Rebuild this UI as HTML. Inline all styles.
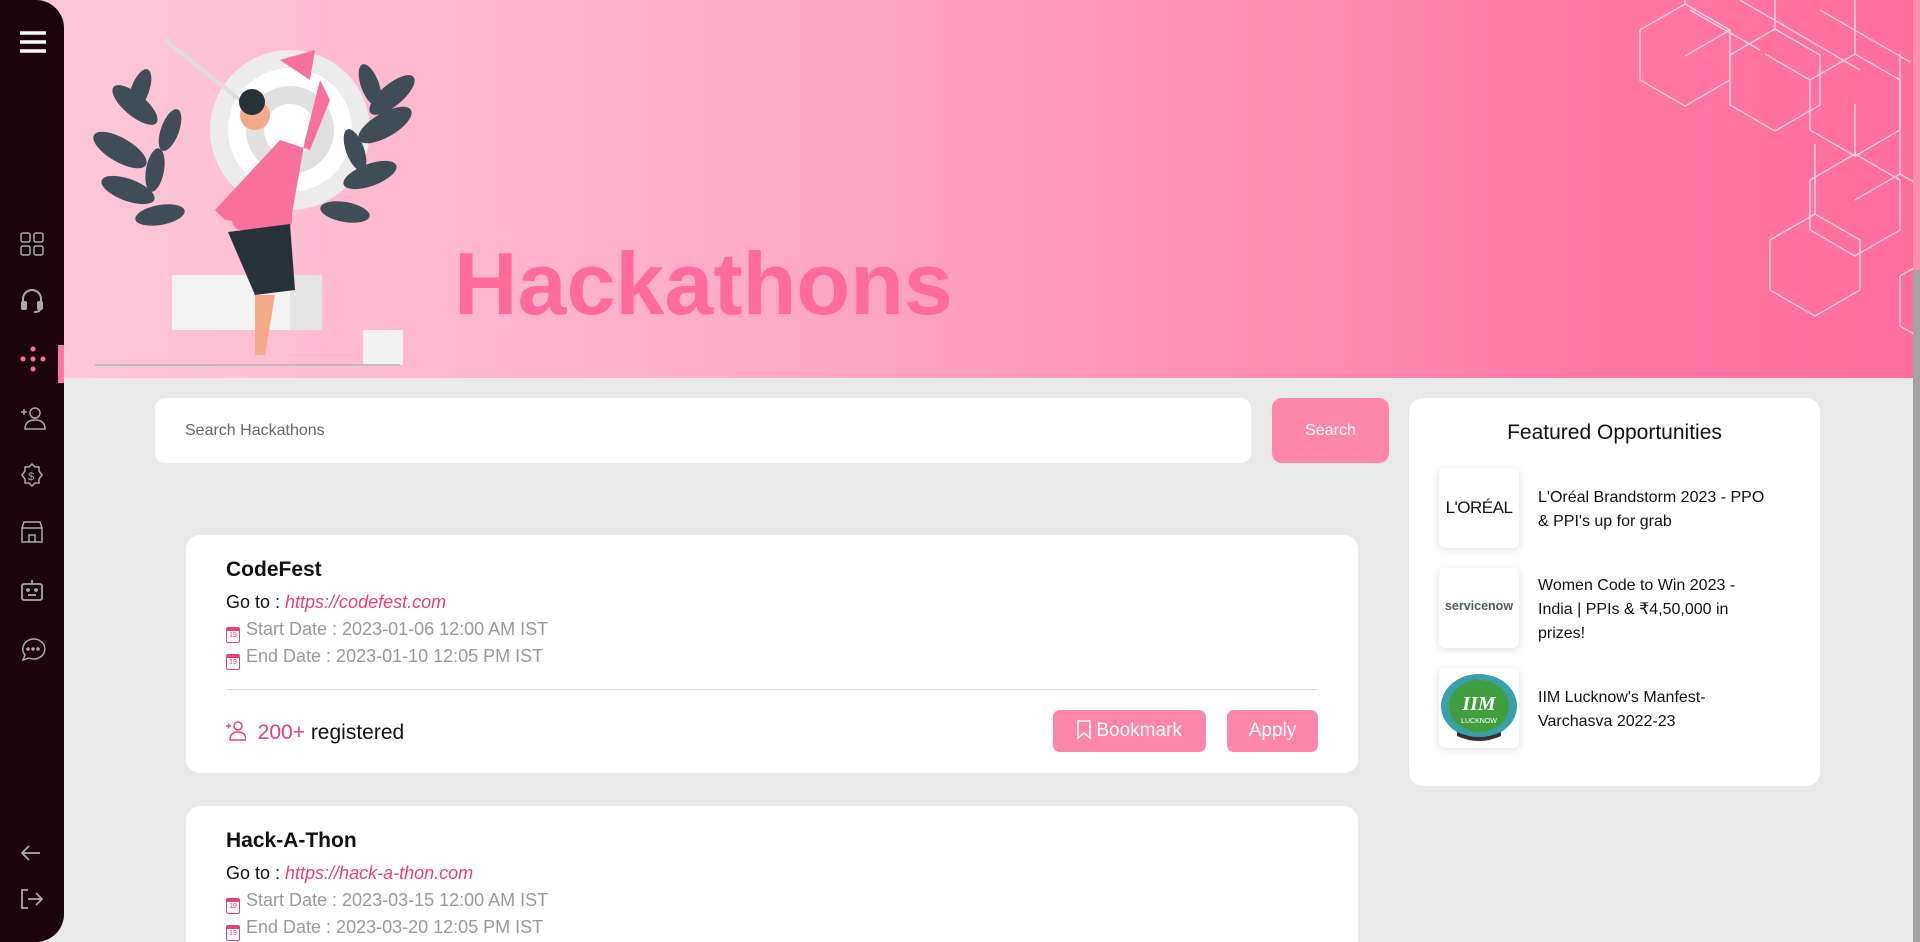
<!DOCTYPE html>
<html style="overflow:hidden;height:942px"><head><meta charset="utf-8"><style>
*{box-sizing:border-box;margin:0;padding:0}
body{width:1920px;height:942px;overflow:hidden;background:#e9e9e9;font-family:"Liberation Sans",sans-serif;position:relative}
.side{position:absolute;left:0;top:0;width:64px;height:942px;background:#1c030c;border-radius:0 28px 28px 0;z-index:5}
.side svg{position:absolute;left:20px}
.banner{position:absolute;left:40px;top:0;width:1873px;height:378px;background:linear-gradient(90deg,#fdc8da 0%,#ffa9c6 40%,#ff77a3 85%,#ff6d9d 100%);overflow:hidden}
.scroll{position:absolute;left:1913px;top:0;width:7px;height:942px;background:#ff8fb2}
.thumb{position:absolute;left:1913px;top:270px;width:7px;height:672px;background:#a3a3a3}
h1{position:absolute;top:233px;font-size:88px;font-weight:bold;color:#ff6b9b}
.search{position:absolute;left:155px;top:398px;width:1096px;height:65px;background:#fff;border-radius:10px;padding-left:30px;line-height:65px;font-size:16px;color:#666}
.sbtn{position:absolute;left:1272px;top:398px;width:117px;height:65px;background:#ff86ab;border-radius:10px;color:#fff;text-align:center;line-height:65px;font-size:16px}
.card{position:absolute;left:186px;width:1172px;background:#fff;border-radius:14px}
.card .t{position:absolute;left:40px;font-size:21px;font-weight:bold;color:#111}
.card .l{position:absolute;left:40px;font-size:18px;color:#111}
.card .l i{color:#e8407a}
.card .d{position:absolute;left:40px;font-size:18px;color:#999}
.cal{display:inline-block;width:14px;height:16px;border:1.5px solid #e8407a;border-radius:2px;border-top-width:4px;vertical-align:-2px;margin-right:6px;font-size:7px;color:#e8407a;text-align:center;line-height:10px}
.hr{position:absolute;left:40px;right:40px;height:1px;background:#ddd}
.btn{position:absolute;height:42px;background:#ff86ab;border-radius:7px;color:#fff;font-size:19px;line-height:42px;text-align:center}
.feat{position:absolute;left:1409px;top:398px;width:411px;height:388px;background:#fff;border-radius:14px}
.feat h2{position:absolute;left:0;right:0;top:23px;text-align:center;font-weight:normal;font-size:21px;color:#111}
.logo{position:absolute;left:30px;width:80px;height:80px;background:#fff;border-radius:6px;box-shadow:0 2px 8px rgba(0,0,0,.12);overflow:hidden}
.ft{position:absolute;left:129px;width:232px;font-size:16px;line-height:24px;color:#111}
</style></head><body>
<div class="banner">
<svg width="1873" height="378" style="position:absolute;left:0;top:0">
<g transform="translate(-40,0)">
<circle cx="290" cy="130" r="80" fill="#ececec"/><circle cx="290" cy="130" r="62" fill="#fff"/><circle cx="290" cy="130" r="44" fill="#e0e0e0"/><circle cx="290" cy="130" r="26" fill="#fff"/>
<line x1="165" y1="40" x2="240" y2="100" stroke="#ddd" stroke-width="4"/>
<g fill="#3f4d57">
<ellipse cx="120" cy="150" rx="30" ry="12" transform="rotate(30 120 150)"/><ellipse cx="135" cy="105" rx="28" ry="11" transform="rotate(40 135 105)"/><ellipse cx="128" cy="190" rx="28" ry="11" transform="rotate(20 128 190)"/><ellipse cx="160" cy="215" rx="25" ry="10" transform="rotate(-10 160 215)"/><ellipse cx="140" cy="90" rx="9" ry="22" transform="rotate(20 140 90)"/><ellipse cx="170" cy="130" rx="9" ry="22" transform="rotate(20 170 130)"/><ellipse cx="155" cy="170" rx="9" ry="22" transform="rotate(10 155 170)"/>
<ellipse cx="385" cy="125" rx="30" ry="12" transform="rotate(-30 385 125)"/><ellipse cx="392" cy="95" rx="28" ry="11" transform="rotate(-40 392 95)"/><ellipse cx="370" cy="175" rx="28" ry="11" transform="rotate(-20 370 175)"/><ellipse cx="345" cy="212" rx="25" ry="10" transform="rotate(10 345 212)"/><ellipse cx="370" cy="85" rx="9" ry="22" transform="rotate(-20 370 85)"/><ellipse cx="355" cy="150" rx="9" ry="22" transform="rotate(-20 355 150)"/>
</g>
<rect x="172" y="275" width="150" height="55" fill="#f3f3f3"/><rect x="290" y="275" width="32" height="55" fill="#e4e4e4"/>
<rect x="363" y="330" width="40" height="35" fill="#f2f2f2"/>
<line x1="95" y1="365" x2="400" y2="365" stroke="#bbb" stroke-width="2"/>
<path d="M215 210 L280 140 L310 150 L330 100 L320 80 L305 140 L290 225 L225 220 Z" fill="#f8719d"/>
<rect x="232" y="190" width="60" height="40" rx="10" fill="#f8719d"/>
<path d="M228 232 L290 224 L295 290 L255 295 Z" fill="#263238"/>
<path d="M255 295 L275 295 L265 355 L255 355 Z" fill="#f4a98b"/>
<circle cx="255" cy="115" r="15" fill="#f4a98b"/><circle cx="252" cy="102" r="13" fill="#263238"/>
<path d="M280 60 L315 50 L310 80 Z" fill="#f8719d"/>
</g>
<g stroke="#ffe3ee" stroke-width="1.5" fill="none" opacity=".85">
<path d="M1600 30 l45 -26 l45 26 v50 l-45 26 l-45 -26 z"/><path d="M1645 4 v-30 M1645 56 l45 -26"/>
<path d="M1690 55 l45 -26 l45 26 v50 l-45 26 l-45 -26 z"/><path d="M1735 29 v-40"/>
<path d="M1770 80 l45 -26 l45 26 v50 l-45 26 l-45 -26 z"/><path d="M1815 54 v-60 M1770 80 l-45 -26"/>
<path d="M1770 180 l45 -26 l45 26 v50 l-45 26 l-45 -26 z"/><path d="M1815 154 v-50"/>
<path d="M1730 240 l45 -26 l45 26 v50 l-45 26 l-45 -26 z"/><path d="M1775 214 v-70"/>
<path d="M1815 200 l45 -26 l45 26 v50 l-45 26"/><path d="M1860 174 v-120 M1860 276 v50 l45 26"/>
<path d="M1650 10 l70 40 M1700 0 l120 70 M1780 10 l90 52"/>
</g>
</svg>
<h1 style="left:414px">Hackathons</h1>
</div>
<div class="scroll"></div><div class="thumb"></div>
<div class="side">
<svg style="left:20px;top:30px" width="26" height="24"><g stroke="#fff" stroke-width="3.5"><line x1="0" y1="3" x2="26" y2="3"/><line x1="0" y1="12" x2="26" y2="12"/><line x1="0" y1="21" x2="26" y2="21"/></g></svg>
<svg style="top:232px" width="24" height="24" fill="none" stroke="#aaa" stroke-width="1.5"><rect x="1" y="1" width="9" height="9" rx="2"/><rect x="14" y="1" width="9" height="9" rx="2"/><rect x="1" y="14" width="9" height="9" rx="2"/><rect x="14" y="14" width="9" height="9" rx="2"/></svg>
<svg style="top:288px" width="24" height="26" fill="none" stroke="#aaa" stroke-width="2"><path d="M3 16 v-5 a9 9 0 0 1 18 0 v5"/><rect x="2" y="14" width="4" height="7" rx="1" fill="#aaa"/><rect x="18" y="14" width="4" height="7" rx="1" fill="#aaa"/><path d="M20 21 q0 3 -6 3"/></svg>
<svg style="top:346px" width="26" height="26" fill="#ff6d9d"><circle cx="13" cy="3" r="2.5"/><circle cx="3" cy="13" r="2.5"/><circle cx="13" cy="13" r="2.5"/><circle cx="23" cy="13" r="2.5"/><circle cx="13" cy="23" r="2.5"/></svg>
<div style="position:absolute;left:58px;top:345px;width:6px;height:38px;background:#ff7aa3"></div>
<svg style="top:406px" width="26" height="24" fill="none" stroke="#aaa" stroke-width="1.5"><circle cx="15" cy="7" r="5"/><path d="M5 23 q0 -9 10 -9 q10 0 10 9 z"/><path d="M1 6 h6 M4 3 v6"/></svg>
<svg style="top:463px" width="24" height="24" fill="none" stroke="#aaa" stroke-width="1.5"><path d="M12 1 l3 3 4 0 0 4 3 4 -3 4 0 4 -4 0 -3 3 -3 -3 -4 0 0 -4 -3 -4 3 -4 0 -4 4 0 z"/><text x="8" y="17" font-size="11" fill="#aaa" stroke="none">$</text></svg>
<svg style="top:520px" width="24" height="24" fill="none" stroke="#aaa" stroke-width="1.5"><path d="M2 8 l2 -6 h16 l2 6 v14 h-20 z M2 8 h20"/><path d="M9 22 v-7 h6 v7"/></svg>
<svg style="top:578px" width="24" height="24" fill="none" stroke="#aaa" stroke-width="1.8"><rect x="2" y="6" width="20" height="16" rx="2"/><path d="M12 6 v-4"/><circle cx="8" cy="12" r="1" fill="#aaa"/><circle cx="16" cy="12" r="1" fill="#aaa"/><path d="M8 17 h8"/></svg>
<svg style="top:636px" width="26" height="26" fill="none" stroke="#aaa" stroke-width="1.5"><path d="M3 24 l2 -5 a11 10 0 1 1 4 3 z"/><circle cx="8" cy="13" r="1" fill="#aaa"/><circle cx="13" cy="13" r="1" fill="#aaa"/><circle cx="18" cy="13" r="1" fill="#aaa"/></svg>
<svg style="top:843px" width="22" height="20" fill="none" stroke="#aaa" stroke-width="1.8"><path d="M20 10 h-18 M9 3 l-7 7 7 7"/></svg>
<svg style="top:888px" width="24" height="22" fill="none" stroke="#aaa" stroke-width="1.8"><path d="M8 2 h-6 v18 h6 M8 11 h14 M16 5 l6 6 -6 6"/></svg>
</div>

<div class="search">Search Hackathons</div>
<div class="sbtn">Search</div>

<div class="card" style="top:535px;height:238px">
<div class="t" style="top:23px">CodeFest</div>
<div class="l" style="top:57px">Go to : <i>https://codefest.com</i></div>
<div class="d" style="top:84px"><span class="cal">19</span>Start Date : 2023-01-06 12:00 AM IST</div>
<div class="d" style="top:111px"><span class="cal">19</span>End Date : 2023-01-10 12:05 PM IST</div>
<div class="hr" style="top:154px"></div>
<div class="l" style="top:185px;font-size:21px"><svg width="20" height="22" fill="none" stroke="#e8407a" stroke-width="1.5" style="vertical-align:-3px"><circle cx="12" cy="6" r="4"/><path d="M4 20 q0 -8 8 -8 q8 0 8 8 z"/><path d="M0 6 h5 M2.5 3.5 v5"/></svg> <span style="color:#e8407a">&nbsp;200+</span> registered</div>
<div class="btn" style="left:867px;top:175px;width:153px"><svg width="14" height="19" fill="none" stroke="#fff" stroke-width="1.6" style="vertical-align:-3px"><path d="M1 1 h12 v17 l-6 -5 -6 5 z"/></svg> Bookmark</div>
<div class="btn" style="left:1041px;top:175px;width:91px">Apply</div>
</div>

<div class="card" style="top:806px;height:136px;border-radius:14px 14px 0 0">
<div class="t" style="top:23px">Hack-A-Thon</div>
<div class="l" style="top:57px">Go to : <i>https://hack-a-thon.com</i></div>
<div class="d" style="top:84px"><span class="cal">19</span>Start Date : 2023-03-15 12:00 AM IST</div>
<div class="d" style="top:111px"><span class="cal">19</span>End Date : 2023-03-20 12:05 PM IST</div>
</div>

<div class="feat">
<h2>Featured Opportunities</h2>
<div class="logo" style="top:70px"><div style="margin-top:30px;text-align:center;font-size:17px;color:#111;letter-spacing:-0.5px">L'ORÉAL</div></div>
<div class="ft" style="top:88px">L'Oréal Brandstorm 2023 - PPO &amp; PPI's up for grab</div>
<div class="logo" style="top:170px"><div style="margin-top:31px;text-align:center;font-size:12.5px;font-weight:bold;color:#4f5b5b">servicenow</div></div>
<div class="ft" style="top:176px">Women Code to Win 2023 - India | PPIs &amp; ₹4,50,000 in prizes!</div>
<div class="logo" style="top:270px"><svg width="80" height="80"><ellipse cx="40" cy="38" rx="38" ry="32" fill="#3aa0a8"/><ellipse cx="40" cy="38" rx="30" ry="26" fill="#3f9f3f"/><text x="40" y="42" text-anchor="middle" font-size="20" font-style="italic" font-family="Liberation Serif" fill="#fff" font-weight="bold">IIM</text><text x="40" y="55" text-anchor="middle" font-size="7" fill="#fff">LUCKNOW</text><path d="M18 68 q22 10 44 0 v-4 q-22 10 -44 0z" fill="#333"/></svg></div>
<div class="ft" style="top:288px">IIM Lucknow's Manfest-Varchasva 2022-23</div>
</div>
</body></html>
